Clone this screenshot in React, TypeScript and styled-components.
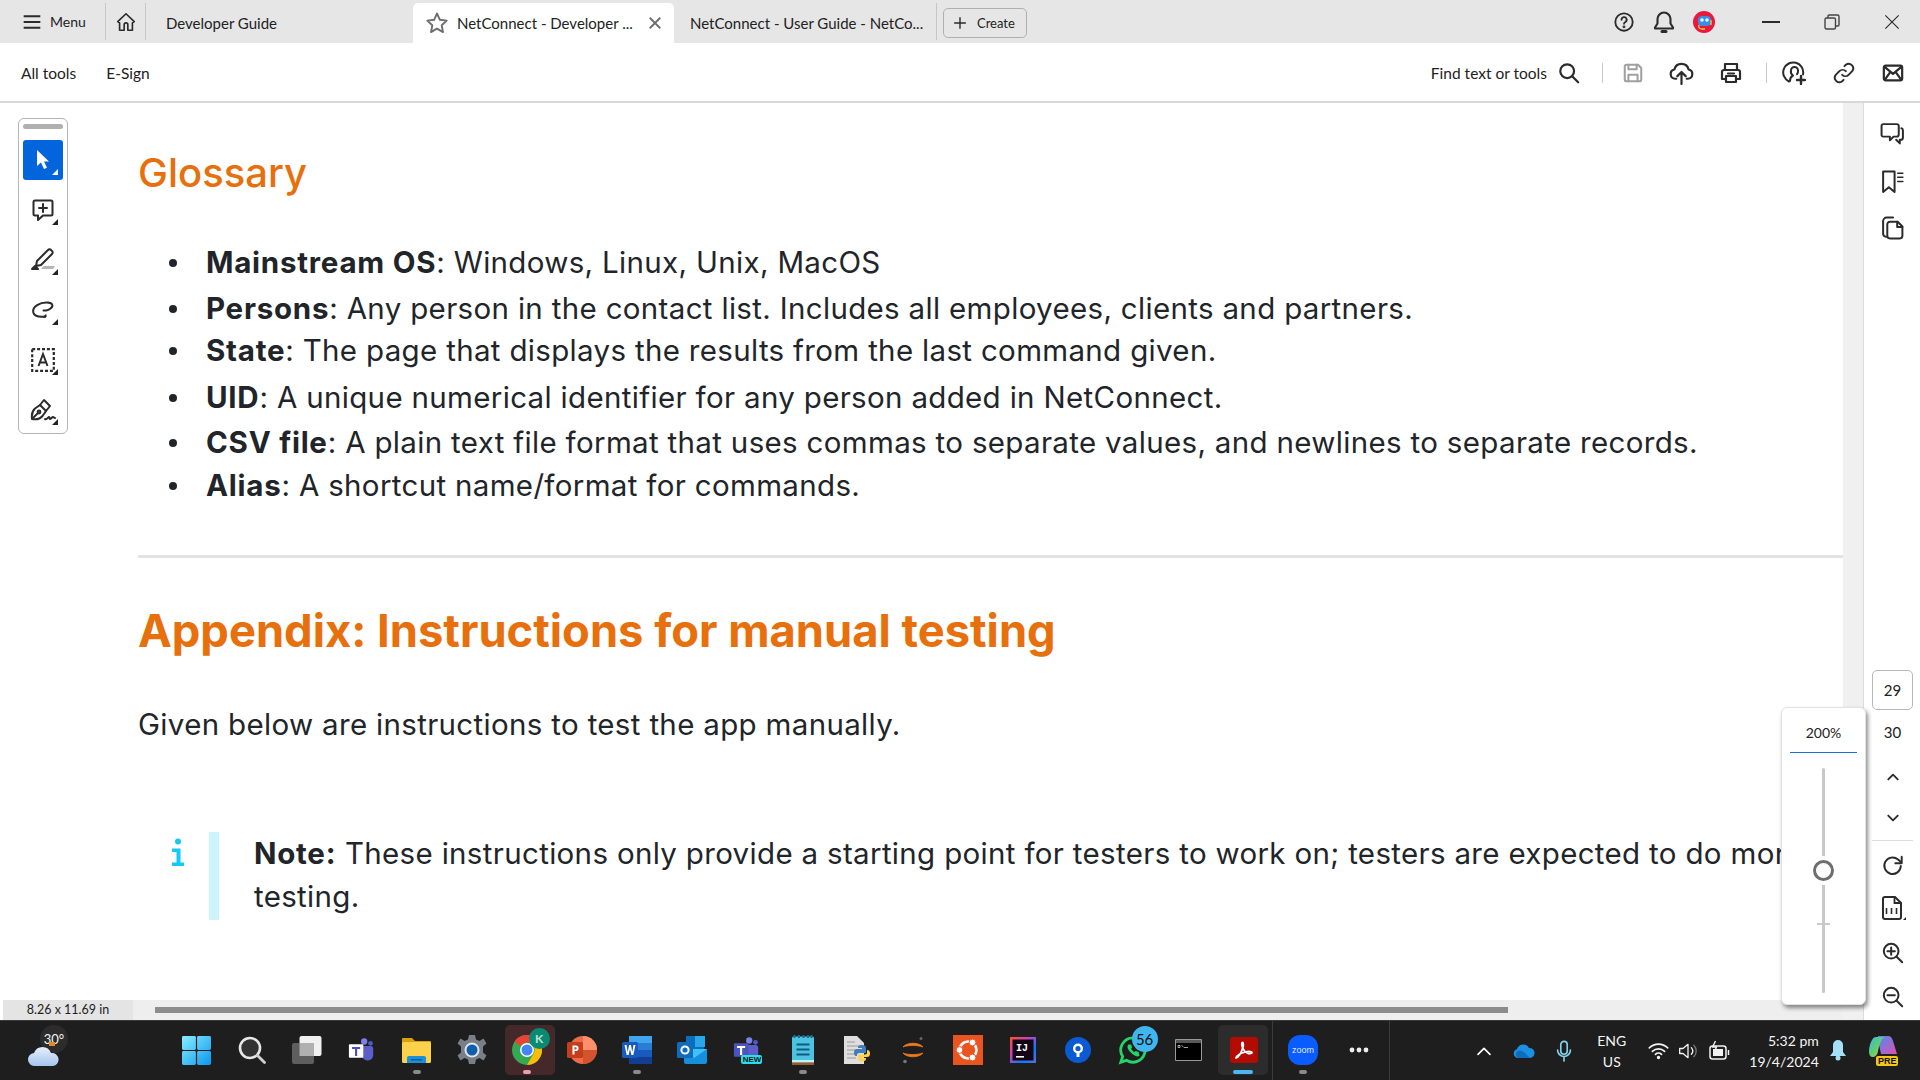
import * as React from 'react';
import styled, { createGlobalStyle } from 'styled-components';

const GlobalStyle = createGlobalStyle`
  html, body {
    margin: 0;
    padding: 0;
    background: #fff;
    overflow: hidden;
  }
`;

const Page = styled.div`
  width: 1920px;
  height: 1080px;
  display: flex;
  flex-direction: column;
  overflow: hidden;
  position: relative;
  font-family: 'Lato', 'Liberation Sans', sans-serif;
  color: #222;
`;

/* ---- title bar ---- */
const TitleBar = styled.div`
  height: 43px;
  flex: none;
  background: #e6e6e6;
  display: flex;
  align-items: flex-end;
  font-size: 15px;
`;

const MenuButton = styled.div`
  width: 106px;
  height: 37px;
  flex: none;
  box-sizing: border-box;
  padding-left: 22px;
  display: flex;
  align-items: center;
  gap: 8px;
  font-size: 14px;
  margin-bottom: 3px;
  border-right: 1px solid #c6c6c6;
`;

const HomeButton = styled.div`
  width: 40px;
  height: 37px;
  flex: none;
  box-sizing: border-box;
  display: flex;
  align-items: center;
  justify-content: center;
  margin-bottom: 3px;
  border-right: 1px solid #c6c6c6;
`;

const PlainTab = styled.div<{ $width: number; $pad: number }>`
  width: ${p => p.$width}px;
  height: 40px;
  flex: none;
  padding-left: ${p => p.$pad}px;
  box-sizing: border-box;
  display: flex;
  align-items: center;
  white-space: nowrap;
`;

const ActiveTab = styled.div`
  width: 261px;
  height: 40px;
  flex: none;
  box-sizing: border-box;
  background: #fff;
  border-radius: 5px 5px 0 0;
  padding: 0 12px;
  display: flex;
  align-items: center;
  gap: 8px;
  white-space: nowrap;

  svg:last-child {
    margin-left: auto;
  }
`;

const TabSplit = styled.div`
  width: 1px;
  height: 37px;
  background: #c6c6c6;
  margin-bottom: 3px;
`;

const CreateButton = styled.div`
  width: 84px;
  height: 30px;
  box-sizing: border-box;
  margin: 0 0 5px 6px;
  border: 1px solid #b0b0b0;
  border-radius: 5px;
  display: flex;
  align-items: center;
  gap: 10px;
  padding-left: 9px;
  font-size: 13px;
`;

const Spacer = styled.div`
  flex: 1;
`;

const TitleIcons = styled.div`
  height: 43px;
  display: flex;
  align-items: center;
  gap: 17px;
  margin-right: 47px;
  padding-top: 1px;
  box-sizing: border-box;
`;

const WindowControls = styled.div`
  height: 43px;
  display: flex;
  align-items: center;
  gap: 44px;
  margin-right: 20px;
`;

/* ---- tool bar ---- */
const ToolBar = styled.div`
  height: 60px;
  flex: none;
  box-sizing: border-box;
  border-bottom: 2px solid #d8d8d8;
  display: flex;
  align-items: center;
  padding: 1px 16px 0 21px;
  font-size: 15.5px;
`;

const ToolLink = styled.div`
  margin-right: 30px;
`;

const ToolGroup = styled.div<{ $gap: number }>`
  display: flex;
  align-items: center;
  gap: ${p => p.$gap}px;
`;

const ToolDivider = styled.div<{ $before: number; $after: number }>`
  width: 1px;
  height: 20px;
  margin: 0 ${p => p.$after}px 0 ${p => p.$before}px;
  background: #c8c8c8;
`;

/* ---- main area ---- */
const Main = styled.div`
  flex: 1;
  display: flex;
  min-height: 0;
`;

const DocColumn = styled.div`
  width: 1843px;
  display: flex;
  flex-direction: column;
  position: relative;
`;

const Doc = styled.div`
  flex: 1;
  min-height: 0;
  overflow: hidden;
  box-sizing: border-box;
  padding: 45px 0 0 138px;
  font-family: 'Inter', 'Liberation Sans', sans-serif;
  color: #212529;
`;

const Glossary = styled.h2`
  margin: 0;
  font-size: 40px;
  line-height: 50px;
  font-weight: 500;
  color: #e76f0c;
`;

const GlossaryList = styled.ul`
  list-style: none;
  margin: 44px 0 0;
  padding: 0;
`;

const BodyText = `
  font-size: 29.5px;
  letter-spacing: 0.33px;
  white-space: nowrap;

  strong {
    font-weight: 700;
    letter-spacing: 0.75px;
  }
`;

const GlossaryItem = styled.li<{ $gap: number }>`
  position: relative;
  margin-top: ${p => p.$gap}px;
  padding-left: 68px;
  line-height: 40px;
  ${BodyText}

  &::before {
    content: '';
    position: absolute;
    left: 31px;
    top: 17px;
    width: 8px;
    height: 8px;
    border-radius: 50%;
    background: #212529;
  }
`;

const Rule = styled.hr`
  border: none;
  height: 3px;
  background: #e3e3e3;
  margin: 50px 0 0;
`;

const AppendixHeading = styled.h1`
  margin: 43px 0 0;
  font-size: 45.3px;
  line-height: 60px;
  font-weight: 700;
  color: #e76f0c;
  white-space: nowrap;
`;

const Lead = styled.p`
  margin: 43px 0 0;
  line-height: 40px;
  ${BodyText}
`;

const NoteBox = styled.div`
  display: flex;
  margin: 88px 0 0 33px;
`;

const NoteIcon = styled.div`
  width: 38px;
  flex: none;
  padding-top: 6px;
`;

const NoteBody = styled.div`
  border-left: 10px solid #cdf3fc;
  padding: 0 0 0 35px;
  height: 88px;
  line-height: 43px;
  ${BodyText}
`;

const StatusRow = styled.div`
  height: 20px;
  flex: none;
  display: flex;
  background: #eeeeee;
  margin-left: 3px;
`;

const PageSize = styled.div`
  width: 130px;
  background: #e4e4e4;
  font-size: 12.5px;
  line-height: 20px;
  text-align: center;
  flex: none;
`;

const HThumbRow = styled.div`
  flex: 1;
  padding: 7px 0 0 22px;
`;

const HThumb = styled.div`
  width: 1353px;
  height: 6px;
  background: #8c8c8c;
`;

const VTrack = styled.div`
  width: 20px;
  flex: none;
  background: #f0f0f0;
`;

const Rail = styled.div`
  width: 57px;
  flex: none;
  box-sizing: border-box;
  border-left: 1px solid #dcdcdc;
  display: flex;
  flex-direction: column;
  align-items: center;
  padding: 18px 0 11px 1px;
  position: relative;
`;

const RailIcon = styled.div<{ $top: number }>`
  height: 24px;
  margin-top: ${p => p.$top}px;
  display: flex;
  align-items: center;
  justify-content: center;
`;

const RailSpacer = styled.div`
  flex: 1;
`;

const PageBox = styled.div`
  width: 41px;
  height: 40px;
  flex: none;
  box-sizing: border-box;
  border: 1px solid #b8b8b8;
  border-radius: 5px;
  font-size: 15px;
  display: flex;
  align-items: center;
  justify-content: center;
`;

const PageNum = styled.div`
  height: 39px;
  margin-top: 2px;
  font-size: 15px;
  display: flex;
  align-items: center;
  justify-content: center;
`;

const RailLine = styled.div`
  width: 41px;
  height: 1px;
  background: #ddd;
  margin-top: 10px;
`;

/* ---- floating parts ---- */
const Palette = styled.div`
  position: absolute;
  left: 18px;
  top: 15px;
  width: 50px;
  height: 316px;
  box-sizing: border-box;
  background: #fff;
  border: 1px solid #b5b5b5;
  border-radius: 6px;
  display: flex;
  flex-direction: column;
  align-items: center;
  gap: 10px;
  padding-top: 5px;
`;

const Grip = styled.div`
  width: 40px;
  height: 5px;
  flex: none;
  border-radius: 3px;
  background: #b0b0b0;
  margin-bottom: 1px;
`;

const PaletteButton = styled.div<{ $active?: boolean }>`
  width: 40px;
  height: 40px;
  flex: none;
  border-radius: 3px;
  background: ${p => (p.$active ? '#0265dc' : 'transparent')};
  display: flex;
  align-items: center;
  justify-content: center;
  position: relative;

  &::after {
    content: '';
    position: absolute;
    right: 5px;
    bottom: 5px;
    border-style: solid;
    border-width: 0 0 6px 6px;
    border-color: transparent transparent ${p => (p.$active ? '#fff' : '#222')} transparent;
  }
`;

const ZoomPopup = styled.div`
  position: absolute;
  left: 1781px;
  top: 604px;
  width: 85px;
  height: 298px;
  box-sizing: border-box;
  background: #fff;
  border: 1px solid #e2e2e2;
  border-radius: 6px;
  box-shadow: 2px 3px 4px rgba(0, 0, 0, 0.45);
  display: flex;
  flex-direction: column;
  align-items: center;
  z-index: 2;
`;

const ZoomValue = styled.div`
  width: 67px;
  height: 44px;
  border-bottom: 1px solid #1f6fc9;
  font-size: 14px;
  line-height: 50px;
  text-align: center;
`;

const SliderTrack = styled.div`
  width: 3px;
  height: 225px;
  margin-top: 15px;
  background: #c8c8c8;
  border-radius: 2px;
  position: relative;
`;

const SliderKnob = styled.div`
  position: absolute;
  left: -9px;
  top: 92px;
  width: 21px;
  height: 21px;
  box-sizing: border-box;
  border: 3px solid #6e6e6e;
  border-radius: 50%;
  background: #fff;
  box-shadow: 0 0 0 4px #fff;
`;

const SliderTick = styled.div`
  position: absolute;
  left: -5px;
  top: 155px;
  width: 13px;
  height: 2px;
  background: #c8c8c8;
`;

/* ---- taskbar ---- */
const Taskbar = styled.div`
  height: 60px;
  flex: none;
  box-sizing: border-box;
  border-top: 1px solid #3a3a3a;
  background: #1e1e1e;
  display: flex;
  align-items: stretch;
  color: #f4f4f4;
  position: relative;
`;

const Weather = styled.div`
  width: 169px;
  flex: none;
  position: relative;
`;

const WeatherCloud = styled.div`
  position: absolute;
  left: 27px;
  top: 21px;
`;

const WeatherTemp = styled.div`
  position: absolute;
  left: 40px;
  top: 4px;
  width: 28px;
  height: 28px;
  border-radius: 50%;
  background: #2c2c2c;
  font-size: 13px;
  line-height: 28px;
  text-align: center;
`;

const AppSlot = styled.div<{ $active?: boolean; $tint?: string; $divider?: boolean; $width?: number }>`
  width: ${p => p.$width || 55.1}px;
  flex: none;
  position: relative;
  display: flex;
  align-items: center;
  justify-content: center;
  padding-bottom: 1px;
  box-sizing: border-box;
  border-right: ${p => (p.$divider ? '1px solid #3c3c3c' : 'none')};

  &::before {
    content: ${p => (p.$active ? "''" : 'none')};
    position: absolute;
    left: ${p => (p.$divider ? 2 : 5)}px;
    width: 50px;
    top: 4px;
    bottom: 5px;
    border-radius: 5px;
    background: ${p => p.$tint || '#2c2c2c'};
  }

  & > * {
    position: relative;
  }
`;

const RunDot = styled.div<{ $color?: string; $wide?: boolean; $shift?: number }>`
  && {
    position: absolute;
  }
  left: ${p => (p.$shift ? `calc(50% + ${p.$shift}px)` : '50%')};
  bottom: 6px;
  width: ${p => (p.$wide ? 20 : 8)}px;
  height: 4px;
  margin-left: ${p => (p.$wide ? -10 : -4)}px;
  border-radius: 2px;
  background: ${p => p.$color || '#8a8a8a'};
`;

const Badge = styled.div`
  && {
    position: absolute;
  }
  left: 26px;
  top: 5px;
  width: 26px;
  height: 26px;
  border-radius: 50%;
  background: #3fb6ee;
  color: #111;
  font-size: 15px;
  line-height: 26px;
  text-align: center;
`;

const AvatarBadge = styled.div`
  && {
    position: absolute;
  }
  left: 29px;
  top: 7px;
  width: 21px;
  height: 21px;
  border-radius: 50%;
  background: #0a8a72;
  color: #b8e6dc;
  font-size: 12px;
  font-weight: 700;
  line-height: 21px;
  text-align: center;
`;

const Tray = styled.div`
  flex: 1;
  display: flex;
  align-items: center;
  padding-left: 74px;
`;

const TrayCell = styled.div<{ $width: number }>`
  width: ${p => p.$width}px;
  flex: none;
  display: flex;
  align-items: center;
  justify-content: center;
`;

const LangBlock = styled.div`
  width: 56px;
  flex: none;
  text-align: center;
  font-size: 14px;
  line-height: 21px;
`;

const Clock = styled.div`
  width: 78px;
  flex: none;
  text-align: right;
  font-size: 14px;
  line-height: 21px;
  white-space: nowrap;
`;

const TagWrap = styled.div<{ $w: number; $h: number }>`
  position: relative;
  width: ${p => p.$w}px;
  height: ${p => p.$h}px;
`;

const NewTag = styled.span`
  position: absolute;
  left: 8px;
  top: 19px;
  width: 21px;
  height: 9px;
  background: #27e0ea;
  color: #111;
  font: 700 8px/9px 'Liberation Sans', sans-serif;
  text-align: center;
  border-radius: 2px;
`;

const PreTag = styled.span`
  position: absolute;
  right: 0;
  bottom: 0;
  width: 22px;
  height: 10px;
  border-radius: 2px;
  background: #f5c518;
  color: #111;
  font: 700 9px/10px 'Liberation Sans', sans-serif;
  text-align: center;
`;

/* ---- icons ---- */
const Stroke: React.FC<React.PropsWithChildren<{ size?: number; color?: string; sw?: number }>> = ({
  size = 24,
  color = '#2b2b2b',
  sw = 2,
  children,
}) => (
  <svg
    width={size}
    height={size}
    viewBox="0 0 24 24"
    fill="none"
    stroke={color}
    strokeWidth={sw}
    strokeLinecap="round"
    strokeLinejoin="round"
  >
    {children}
  </svg>
);

const HamburgerIcon = () => (
  <Stroke size={20} sw={2.4}>
    <path d="M2 5h20M2 12h20M2 19h20" strokeLinecap="butt" />
  </Stroke>
);
const HomeIcon = () => (
  <Stroke size={22} sw={1.8}>
    <path d="M3 11.5 12 3l9 8.5-2 1.5v8h-5v-6a2 2 0 0 0-4 0v6H5v-8z" />
  </Stroke>
);
const StarIcon = () => (
  <Stroke size={24} color="#6e6e6e" sw={1.9}>
    <path d="M12 2.5l2.9 6.3 6.8.8-5 4.7 1.3 6.8-6-3.4-6 3.4 1.3-6.8-5-4.7 6.8-.8z" />
  </Stroke>
);
const TabCloseIcon = () => (
  <Stroke size={14} color="#6e6e6e" sw={3.2}>
    <path d="M3 3l18 18M21 3 3 21" strokeLinecap="butt" />
  </Stroke>
);
const PlusIcon = () => (
  <Stroke size={14} sw={2.4}>
    <path d="M12 2v20M2 12h20" strokeLinecap="butt" />
  </Stroke>
);
const HelpIcon = () => (
  <Stroke size={22} sw={2}>
    <circle cx="12" cy="12" r="9.5" />
    <path d="M9.3 9.5a2.8 2.8 0 1 1 4.2 2.4c-.9.6-1.5 1-1.5 2.1" />
    <circle cx="12" cy="17.3" r=".6" fill="#2b2b2b" />
  </Stroke>
);
const BellIcon = () => (
  <Stroke size={24} sw={2.1}>
    <path d="M12 2.5A6.5 6.5 0 0 0 5.5 9v4.5L3 17.5v1h18v-1l-2.5-4V9A6.5 6.5 0 0 0 12 2.5z" />
    <path d="M10 21.5h4" strokeWidth="3" />
  </Stroke>
);
const AvatarIcon = () => (
  <svg width="22" height="22" viewBox="0 0 22 22">
    <circle cx="11" cy="11" r="11" fill="#e8183e" />
    <rect x="5" y="5" width="13" height="10" rx="4" fill="#3a8ce8" />
    <circle cx="9" cy="9" r="1.8" fill="#dff" />
    <circle cx="14" cy="9" r="1.8" fill="#dff" />
    <path d="M6 14c-1 3 1 4 3 4h3" fill="none" stroke="#f5c431" strokeWidth="1.4" />
    <path d="M18 9v5" stroke="#f5c431" strokeWidth="1.4" />
  </svg>
);
const MinimizeIcon = () => (
  <svg width="18" height="2" viewBox="0 0 18 2">
    <rect width="18" height="2" fill="#2b2b2b" />
  </svg>
);
const RestoreIcon = () => (
  <svg width="16" height="16" viewBox="0 0 16 16" fill="none" stroke="#444" strokeWidth="1.4">
    <rect x="1" y="4" width="10.5" height="11" rx="1.5" />
    <path d="M4 4V2.2C4 1.5 4.5 1 5.2 1h8.3c.8 0 1.5.7 1.5 1.5v8.3c0 .7-.5 1.2-1.2 1.2h-2" />
  </svg>
);
const WinCloseIcon = () => (
  <Stroke size={16} sw={1.7}>
    <path d="M2 2l20 20M22 2 2 22" strokeLinecap="butt" />
  </Stroke>
);
const SearchIcon = () => (
  <Stroke size={22} sw={2.4}>
    <circle cx="10" cy="10" r="7.5" />
    <path d="M16 16l6 6" />
  </Stroke>
);
const SaveIcon = () => (
  <Stroke size={22} color="#a0a0a0" sw={2.2}>
    <path d="M3 5a2 2 0 0 1 2-2h12.5L21 6.5V19a2 2 0 0 1-2 2H5a2 2 0 0 1-2-2z" />
    <path d="M7 3v5h9V3M7 21v-7h10v7" />
  </Stroke>
);
const UploadIcon = () => (
  <Stroke size={25} sw={2.1}>
    <path d="M7 18H6a4.5 4.5 0 0 1-.8-8.9 7 7 0 0 1 13.6 0A4.5 4.5 0 0 1 18 18h-1" />
    <path d="M12 23V12M8 15.5l4-4 4 4" />
  </Stroke>
);
const PrintIcon = () => (
  <Stroke size={24} sw={2.2}>
    <path d="M6 9V3h12v6" />
    <path d="M6 18H3v-7a2 2 0 0 1 2-2h14a2 2 0 0 1 2 2v7h-3" />
    <path d="M7 15h10v6H7z" />
    <path d="M9 12.5h6" />
  </Stroke>
);
const ShareIcon = () => (
  <Stroke size={24} sw={2}>
    <path d="M7 20.5a10 10 0 1 1 14-7" />
    <path d="M8 20c0-3 1-4.5 3-5.5-1.5-1-2.5-3-2-5a3.500 3.500 0 0 1 7 0c.2 1.500-.2 2.700-1 3.700" />
    <path d="M19 15v8M15 19h8" strokeWidth="2.4" />
  </Stroke>
);
const LinkIcon = () => (
  <Stroke size={22} sw={2.1}>
    <path d="M10 14a5 5 0 0 0 7 0l4-4a5 5 0 0 0-7-7l-1.5 1.5" />
    <path d="M14 10a5 5 0 0 0-7 0l-4 4a5 5 0 0 0 7 7l1.5-1.5" />
  </Stroke>
);
const MailIcon = () => (
  <Stroke size={22} sw={2.4}>
    <rect x="2" y="4" width="20" height="16" rx="2" />
    <path d="M2.5 5 12 13l9.5-8M3 19.5l6-8.5M21 19.5 15 11" />
  </Stroke>
);
const CommentsIcon = () => (
  <Stroke size={25} sw={1.9}>
    <path d="M3 3h13a2 2 0 0 1 2 2v8a2 2 0 0 1-2 2h-3l-3.5 3.5V15H3a1.5 1.5 0 0 1-1.5-1.5v-9A1.5 1.5 0 0 1 3 3z" />
    <path d="M20.5 7c1 .2 1.5.9 1.5 2v7a2 2 0 0 1-2 2h-1v3.5L15.5 18" />
  </Stroke>
);
const BookmarkIcon = () => (
  <Stroke size={25} sw={1.9}>
    <path d="M3 2.5h11V22l-5.5-4.5L3 22z" />
    <path d="M17 4h5M17 8h5M17 12h5" strokeWidth="1.4" />
  </Stroke>
);
const PagesIcon = () => (
  <Stroke size={25} sw={1.9}>
    <path d="M6 21c-2-.3-3-1.5-3-3V6c0-2 1.5-3.5 3.5-3.5h6" />
    <path d="M7 9a2.5 2.5 0 0 1 2.5-2.5H17l4.5 4.5v9A2.5 2.5 0 0 1 19 22.5H9.5A2.5 2.5 0 0 1 7 20z" />
    <path d="M16.5 6.5V11.5h5" />
  </Stroke>
);
const ChevronUp = () => (
  <Stroke size={14} sw={3.2}>
    <path d="M3 17l9-9 9 9" strokeLinecap="butt" />
  </Stroke>
);
const ChevronDown = () => (
  <Stroke size={14} sw={3.2}>
    <path d="M3 7l9 9 9-9" strokeLinecap="butt" />
  </Stroke>
);
const RotateIcon = () => (
  <Stroke size={22} sw={2.1}>
    <path d="M20.5 12a9 9 0 1 1-3-7l3.500 3" />
    <path d="M21.5 2v7h-7" />
  </Stroke>
);
const ActualSizeIcon = () => (
  <svg width="26" height="26" viewBox="0 0 26 26">
    <path d="M5 2h10l6 6v14a2 2 0 0 1-2 2H5a2 2 0 0 1-2-2V4a2 2 0 0 1 2-2z" fill="none" stroke="#2b2b2b" strokeWidth="2" />
    <path d="M14.5 2v6h6" fill="none" stroke="#2b2b2b" strokeWidth="1.8" />
    <path d="M6.5 13v6M11.5 13v6M16.5 13v6" stroke="#2b2b2b" strokeWidth="1.6" />
    <path d="M9 14.5v.1M9 17.5v.1" stroke="#2b2b2b" strokeWidth="1.6" />
    <path d="M23 25h3v-3z" fill="#222" />
  </svg>
);
const ZoomInIcon = () => (
  <Stroke size={22} sw={2.2}>
    <circle cx="10" cy="10" r="8" />
    <path d="M16 16l6 6M10 6v8M6 10h8" />
  </Stroke>
);
const ZoomOutIcon = () => (
  <Stroke size={22} sw={2.2}>
    <circle cx="10" cy="10" r="8" />
    <path d="M16 16l6 6M6 10h8" />
  </Stroke>
);
const ArrowIcon = () => (
  <svg width="20" height="22" viewBox="0 0 20 22">
    <path d="M5 1v16l4-3.5 3 6.5 3-1.300-3-6.300h5z" fill="#fff" transform="translate(-1 0)" />
  </svg>
);
const AddCommentIcon = () => (
  <Stroke size={24} sw={2}>
    <path d="M4 2.5h16a1.5 1.5 0 0 1 1.5 1.5v12a1.5 1.5 0 0 1-1.5 1.5h-8L7 22v-4.5H4A1.5 1.5 0 0 1 2.5 16V4A1.5 1.5 0 0 1 4 2.5z" />
    <path d="M12 6v8M8 10h8" />
  </Stroke>
);
const HighlightIcon = () => (
  <svg width="26" height="26" viewBox="0 0 26 26" fill="none" stroke="#2b2b2b" strokeWidth="2" strokeLinejoin="round">
    <path d="M7 14 18 3a2 2 0 0 1 3 0l1 1a2 2 0 0 1 0 3L11 18l-5 1z" />
    <path d="M2 22l3-3 3 3z" fill="#2b2b2b" />
    <path d="M11 22h12l2-3H14z" fill="#b5b5b5" stroke="none" />
  </svg>
);
const LassoIcon = () => (
  <Stroke size={26} sw={1.9}>
    <path d="M20 9.5c1.5-2 .5-4-3-4.300C9 4.500 2 9 3 14c.8 3.500 6 4.500 11 4" />
    <path d="M13 18.3c1 .2 1.6-.5 1.4-1.3" />
    <path d="M20 9.5c-1.500 1.800-4.500 3-7.500 3" />
  </Stroke>
);
const TextBoxIcon = () => (
  <svg width="24" height="24" viewBox="0 0 24 24">
    <rect x="1.2" y="1.2" width="21.6" height="21.6" fill="none" stroke="#2b2b2b" strokeWidth="2.2" strokeDasharray="3 1.9" />
    <path d="M7.5 18 12 6l4.5 12M9 14.5h6" fill="none" stroke="#2b2b2b" strokeWidth="2" />
  </svg>
);
const SignIcon = () => (
  <svg width="26" height="24" viewBox="0 0 26 24" fill="none" stroke="#2b2b2b" strokeWidth="2" strokeLinejoin="round" strokeLinecap="round">
    <path d="M2 21c-.6-4 .4-8 3-10.500l5-3.500 6 6-3.500 5C10 21 6 21.800 2 21z" />
    <path d="M10 7l4-5 6 6-4 5" />
    <path d="M2.5 20.500 8 15" />
    <circle cx="9" cy="14" r="1.4" />
    <path d="M15 21c2 1 3-2 4-2s0 2 1 2 2-2 3-2 1 1 2 1" />
  </svg>
);
const InfoIcon = () => (
  <svg width="14" height="30" viewBox="0 0 14 30" fill="#13c9f5">
    <circle cx="7" cy="3.5" r="3" />
    <path d="M1 10.500h8.500v14H13V28H1v-3.500h4.500v-10.500H1z" />
  </svg>
);

const WindowsLogo = () => (
  <svg width="29" height="29" viewBox="0 0 30 30">
    <defs>
      <linearGradient id="wing" x1="0" y1="0" x2="30" y2="30" gradientUnits="userSpaceOnUse">
        <stop offset="0" stopColor="#8aeeff" />
        <stop offset="1" stopColor="#0a96ee" />
      </linearGradient>
    </defs>
    <rect x="0" y="0" width="14.4" height="14.4" rx="1.5" fill="url(#wing)" />
    <rect x="15.6" y="0" width="14.4" height="14.4" rx="1.5" fill="url(#wing)" />
    <rect x="0" y="15.6" width="14.4" height="14.4" rx="1.5" fill="url(#wing)" />
    <rect x="15.6" y="15.6" width="14.4" height="14.4" rx="1.5" fill="url(#wing)" />
  </svg>
);
const TaskSearch = () => (
  <svg width="28" height="28" viewBox="0 0 28 28" fill="none">
    <circle cx="12" cy="12" r="10" fill="#333" stroke="#e8e8e8" strokeWidth="2.6" />
    <path d="M19.5 19.5l7 7" stroke="#d0d0d0" strokeWidth="2.8" strokeLinecap="round" />
  </svg>
);
const TaskView = () => (
  <svg width="30" height="30" viewBox="0 0 30 30">
    <rect x="7.5" y="1" width="22" height="20" rx="2" fill="#f0f0f0" />
    <rect x="0" y="8" width="22" height="21" rx="2" fill="#5e5e5e" />
    <rect x="7.5" y="8" width="14.5" height="13" fill="#b0b0b0" />
  </svg>
);
const TeamsIcon: React.FC<{ isNew?: boolean }> = ({ isNew }) => (
  <svg width="27" height="27" viewBox="0 0 30 30">
    <circle cx="18" cy="5" r="3.5" fill="#7b83eb" />
    <circle cx="25" cy="7" r="2.6" fill="#5059c9" />
    <path d="M13 10h12a3 3 0 0 1 3 3v7c0 4-3 6-6 6s-6-2-7-5z" fill="#5b5fc7" />
    <rect x="1" y="8" width="16" height="15" rx="1" fill={isNew ? '#4b53bc' : '#fff'} />
    <path d="M4.5 11h9v2.3h-3.300V21H7.800v-7.700H4.500z" fill={isNew ? '#fff' : '#4b53bc'} />
  </svg>
);
const FolderIcon = () => (
  <svg width="29" height="26" viewBox="0 0 29 26">
    <path d="M0 2a1 1 0 0 1 1-1h9l3 3h15a1 1 0 0 1 1 1v4H0z" fill="#dba00f" />
    <rect y="5" width="29" height="21" rx="1.5" fill="#fbd24a" />
    <path d="M5 21a2 2 0 0 1 2-2h15a2 2 0 0 1 2 2v5H5z" fill="#1b8fd8" />
    <rect x="9" y="22" width="11" height="1.5" fill="#0a5f9e" />
  </svg>
);
const GearIcon = () => (
  <svg width="30" height="30" viewBox="0 0 30 30">
    <path
      d="M12 0h6l1 4.500 3.500 1.500 4-2.500 3 5-3.500 3v6l3.500 3-3 5-4-2.500-3.500 1.500-1 4.500h-6l-1-4.500-3.500-1.500-4 2.500-3-5 3.500-3v-6l-3.500-3 3-5 4 2.500L11 4.500z"
      fill="#7a7f86"
    />
    <circle cx="15" cy="15" r="7.5" fill="#dfe6ee" />
    <circle cx="15" cy="15" r="5.5" fill="#0f5fa8" />
  </svg>
);
const ChromeIcon = () => (
  <svg width="30" height="30" viewBox="0 0 30 30">
    <circle cx="15" cy="15" r="15" fill="#34a853" />
    <path d="M15 0a15 15 0 0 1 13 7.500H15a7.500 7.500 0 0 0-6.500 3.800L2.500 6.500A15 15 0 0 1 15 0z" fill="#ea4335" />
    <path d="M28 7.500A15 15 0 0 1 15 30l6.500-11.300A7.500 7.500 0 0 0 21.500 11z" fill="#fbbc04" />
    <circle cx="15" cy="15" r="7" fill="#fff" />
    <circle cx="15" cy="15" r="5.5" fill="#4285f4" />
  </svg>
);
const PowerPointIcon = () => (
  <svg width="30" height="30" viewBox="0 0 30 30">
    <circle cx="16" cy="15" r="14" fill="#ed6c47" />
    <path d="M16 1a14 14 0 0 1 14 14H16z" fill="#ff8f6b" />
    <path d="M16 15h14a14 14 0 0 1-14 14z" fill="#d35230" />
    <rect x="0" y="7" width="16" height="16" rx="1.5" fill="#c43e1c" />
    <path d="M5.500 10.500h3.300a2.800 2.800 0 0 1 0 5.600H7.500v3.400h-2zm2 1.700v2.300h1a1.150 1.150 0 0 0 0-2.300z" fill="#fff" />
  </svg>
);
const WordIcon = () => (
  <svg width="30" height="30" viewBox="0 0 30 30">
    <rect x="7" y="1" width="23" height="28" rx="2" fill="#2b7cd3" />
    <rect x="7" y="1" width="23" height="7" fill="#41a5ee" />
    <rect x="7" y="15" width="23" height="7" fill="#185abd" />
    <rect x="7" y="22" width="23" height="7" fill="#103f91" />
    <rect x="0" y="7" width="16" height="16" rx="1.5" fill="#185abd" />
    <path d="M2.500 10h2l1.200 7 1.400-7h1.800l1.400 7 1.200-7h2l-2.200 10h-1.900L8 14l-1.400 6H4.700z" fill="#fff" />
  </svg>
);
const OutlookIcon = () => (
  <svg width="30" height="30" viewBox="0 0 30 30">
    <rect x="9" y="1" width="18" height="22" fill="#0a6ebd" />
    <rect x="18" y="1" width="10" height="11" fill="#28a8ea" />
    <path d="M7 14h23v13a2 2 0 0 1-2 2H9a2 2 0 0 1-2-2z" fill="#1490df" />
    <path d="M30 14 17 23l-10-9z" fill="#50d9ff" opacity="0.7" />
    <rect x="0" y="7" width="16" height="16" rx="1.5" fill="#0f6cbd" />
    <circle cx="8" cy="15" r="3.6" fill="none" stroke="#fff" strokeWidth="2" />
  </svg>
);
const TeamsNewIcon = () => (
  <TagWrap $w={28} $h={28}>
    <TeamsIcon isNew />
    <NewTag>NEW</NewTag>
  </TagWrap>
);
const NotepadIcon = () => (
  <svg width="22" height="30" viewBox="0 0 22 30">
    <rect y="1.5" width="22" height="28.5" rx="1.5" fill="#4cc3e0" />
    <rect y="25" width="22" height="2.5" fill="#c4f0fa" />
    <rect y="27.5" width="22" height="2.5" fill="#9c5a2a" />
    <path d="M2.500 0v3M7 0v3M11.500 0v3M16 0v3M19.500 0v3" stroke="#14708c" strokeWidth="2" />
    <path d="M4.500 9.500h13M4.500 14.500h13M4.500 19.500h13" stroke="#135a80" strokeWidth="2.2" />
  </svg>
);
const PythonFileIcon = () => (
  <svg width="28" height="28" viewBox="0 0 28 28">
    <path d="M0 0h13l7 7v21H0z" fill="#dedede" />
    <path d="M3 6h8M3 10h12M3 14h9M3 18h9M3 22h9" stroke="#9a9a9a" strokeWidth="1.2" />
    <path d="M18 9c3 0 4 1 4 3v5h-7c-1.500 0-2 1-2 2v1h-1c-1.500 0-2-1.500-2-3.500 0-2.500 1-3.500 3-3.500h5v-1h-4v-1c0-1.500 1.500-2 4-2z" fill="#3f7cc0" />
    <path d="M23 14c2 0 3 1 3 3.500S25 21 23 21h-5v1h4v1c0 1.500-1.500 2.500-4 2.500s-4-1-4-3v-4h7c1.500 0 2-1 2-2v-2.500z" fill="#fbd24a" />
  </svg>
);
const EclipseIcon = () => (
  <svg width="22" height="28" viewBox="0 0 22 28" fill="none">
    <path d="M1 11C5 6 17 6 21 11c-5-2-16-2-20 0z" fill="#f07a1f" stroke="#f07a1f" strokeWidth="0.8" />
    <path d="M1 17c4 5 16 5 20 0-5 2-16 2-20 0z" fill="#f07a1f" stroke="#f07a1f" strokeWidth="0.8" />
    <circle cx="19" cy="2.5" r="1.5" fill="#666" />
    <circle cx="3" cy="25.5" r="1.8" fill="#777" />
  </svg>
);
const UbuntuIcon = () => (
  <svg width="30" height="30" viewBox="0 0 30 30">
    <rect width="30" height="30" fill="#e95420" />
    <circle cx="15" cy="15" r="8.5" fill="none" stroke="#fff" strokeWidth="2.6" />
    <circle cx="6.5" cy="15" r="3.4" fill="#fff" stroke="#e95420" />
    <circle cx="19.5" cy="7.5" r="3.4" fill="#fff" stroke="#e95420" />
    <circle cx="19.5" cy="22.5" r="3.4" fill="#fff" stroke="#e95420" />
  </svg>
);
const IntelliJIcon = () => (
  <svg width="26" height="26" viewBox="0 0 26 26">
    <defs>
      <linearGradient id="ij" x1="0" y1="0" x2="1" y2="1">
        <stop offset="0" stopColor="#f9552a" />
        <stop offset="0.35" stopColor="#d43fb0" />
        <stop offset="0.7" stopColor="#087cfa" />
        <stop offset="1" stopColor="#5a6fd8" />
      </linearGradient>
    </defs>
    <rect width="26" height="26" fill="url(#ij)" />
    <rect x="2.5" y="2.5" width="21" height="21" fill="#120516" />
    <text x="6" y="13.5" fill="#fff" fontSize="10" fontWeight="700" fontFamily="Liberation Mono">IJ</text>
    <rect x="6" y="19" width="8" height="1.6" fill="#fff" />
  </svg>
);
const SourcetreeIcon = () => (
  <svg width="26" height="26" viewBox="0 0 26 26">
    <circle cx="13" cy="13" r="13" fill="#0a5ad4" />
    <circle cx="13" cy="11.5" r="3.8" fill="none" stroke="#fff" strokeWidth="2.4" />
    <path d="M13 15v5" stroke="#fff" strokeWidth="3" />
  </svg>
);
const WhatsAppIcon = () => (
  <svg width="30" height="30" viewBox="0 0 32 32" fill="none">
    <path d="M16 3a13 13 0 0 0-11 20l-2 6 6-2A13 13 0 1 0 16 3z" stroke="#25d366" strokeWidth="3" />
    <path d="M11 10c-2 3 0 6 3 9s6 5 9 3l-1-4-3-1-2 1-3-3 1-2-1-3z" fill="#25d366" />
  </svg>
);
const TerminalIcon = () => (
  <svg width="27" height="22" viewBox="0 0 27 22">
    <rect width="27" height="22" rx="1" fill="#9a9a9a" />
    <rect x="1" y="1" width="25" height="3" fill="#5a5a5a" />
    <rect x="1" y="4" width="25" height="17" fill="#000" />
    <path d="M3 6.500h2v2H3zM6.500 6.500l2 1.500M9 8.500h4" stroke="#ccc" strokeWidth="0.8" fill="none" />
  </svg>
);
const AcrobatIcon = () => (
  <svg width="28" height="26" viewBox="0 0 28 26">
    <rect width="28" height="26" rx="3" fill="#b30b00" />
    <path
      d="M6 21c3-1 5.500-6 7-11 .6-2 .4-4.500-.5-4.500s-1 2.500 0 5c1.300 3 3.500 5.500 6 6 1.800.3 3.500 0 3.500-1s-3-1.300-6-.7c-3 .5-5.500 1.500-7.500 3.200-1.300 1-2.900 2.300-2.500 3z"
      fill="none"
      stroke="#fff"
      strokeWidth="1.8"
    />
  </svg>
);
const ZoomAppIcon = () => (
  <svg width="30" height="30" viewBox="0 0 30 30">
    <rect width="30" height="30" rx="12" fill="#0b5cff" />
    <text x="15" y="18" fill="#dfe9ff" fontSize="9" textAnchor="middle" fontFamily="Liberation Sans">zoom</text>
  </svg>
);
const DotsIcon = () => (
  <svg width="24" height="6" viewBox="0 0 24 6" fill="#eee">
    <circle cx="3" cy="3" r="2.4" />
    <circle cx="10" cy="3" r="2.4" />
    <circle cx="17" cy="3" r="2.4" />
  </svg>
);
const CloudSun = () => (
  <svg width="34" height="24" viewBox="0 0 34 24">
    <defs>
      <linearGradient id="cloud" x1="0" y1="0" x2="0" y2="1">
        <stop offset="0" stopColor="#e6f0fc" />
        <stop offset="1" stopColor="#a5c4ee" />
      </linearGradient>
    </defs>
    <rect x="22" y="0" width="6" height="4" fill="#e88a20" />
    <path d="M8 24a6.500 6.500 0 0 1-1-13 9 9 0 0 1 17 0 6.500 6.500 0 0 1 2 13z" fill="url(#cloud)" />
  </svg>
);
const TrayChevron = () => (
  <Stroke size={16} color="#fff" sw={2.4}>
    <path d="M3 17l9-9 9 9" />
  </Stroke>
);
const OneDriveIcon = () => (
  <svg width="22" height="14" viewBox="0 0 22 14">
    <path d="M5 14a4.500 4.500 0 0 1-1-8.800A6.500 6.500 0 0 1 16 4a5 5 0 0 1 1 10z" fill="#1b8fe2" />
    <path d="M5 14a4 4 0 0 1 0-7c2-1 5 0 7 2l5 5z" fill="#0f6cbd" />
  </svg>
);
const MicIcon = () => (
  <Stroke size={22} color="#84d2ea" sw={1.8}>
    <rect x="8.5" y="1.5" width="7" height="14" rx="3.5" />
    <path d="M5 11a7 7 0 0 0 14 0M12 18v5" />
  </Stroke>
);
const WifiIcon = () => (
  <Stroke size={21} color="#f2f2f2" sw={1.9}>
    <path d="M1.500 9a15 15 0 0 1 21 0M5 13a10 10 0 0 1 14 0M8.500 16.500a5 5 0 0 1 7 0" />
    <circle cx="12" cy="20" r="1" fill="#f2f2f2" />
  </Stroke>
);
const VolumeIcon = () => (
  <Stroke size={20} color="#f2f2f2" sw={1.6}>
    <path d="M2 9v6h4l6 5V4L6 9z" />
    <path d="M16 8a6 6 0 0 1 0 8" />
    <path d="M19 5a10 10 0 0 1 0 14" stroke="#777" />
  </Stroke>
);
const BatteryIcon = () => (
  <svg width="22" height="22" viewBox="0 0 22 22" fill="none" stroke="#f2f2f2" strokeWidth="1.5" strokeLinejoin="round">
    <rect x="2" y="6" width="16" height="13" rx="2.5" />
    <path d="M20.500 10v5" />
    <rect x="5" y="9" width="10" height="7" fill="#f2f2f2" stroke="none" />
    <path d="M7.500 1 4.500 7h4l-2 5" strokeWidth="1.4" />
  </svg>
);
const TrayBell = () => (
  <svg width="16" height="21" viewBox="0 0 16 21">
    <path d="M8 0a5 5 0 0 0-5 5v7l-3 4h16l-3-4V5a5 5 0 0 0-5-5z" fill="#a6e0f8" />
    <circle cx="8" cy="18" r="2.5" fill="#a6e0f8" />
  </svg>
);
const CopilotIcon = () => (
  <TagWrap $w={30} $h={30}>
    <svg width="30" height="24" viewBox="0 0 30 24">
      <defs>
        <linearGradient id="cop" x1="0" y1="0" x2="1" y2="1">
          <stop offset="0" stopColor="#3fb4f0" />
          <stop offset="0.5" stopColor="#5bd070" />
          <stop offset="1" stopColor="#f0c040" />
        </linearGradient>
        <linearGradient id="cop2" x1="0" y1="0" x2="1" y2="1">
          <stop offset="0" stopColor="#4c8cf0" />
          <stop offset="1" stopColor="#e050b0" />
        </linearGradient>
      </defs>
      <path d="M10 0h10c3 0 4 2 5 5l4 13H13L10 4z" fill="url(#cop2)" />
      <path d="M8 1h8c-3 3-5 8-6 14-.5 4-3 6-5.500 6C2.500 21 1 19 1 16 1 9 4 1 8 1z" fill="url(#cop)" />
    </svg>
    <PreTag>PRE</PreTag>
  </TagWrap>
);

const App: React.FC = () => (
  <Page>
    <GlobalStyle />
    <TitleBar>
      <MenuButton>
        <HamburgerIcon />
        Menu
      </MenuButton>
      <HomeButton>
        <HomeIcon />
      </HomeButton>
      <PlainTab $width={267} $pad={20}>Developer Guide</PlainTab>
      <ActiveTab>
        <StarIcon />
        NetConnect - Developer ...
        <TabCloseIcon />
      </ActiveTab>
      <PlainTab $width={262} $pad={16}>NetConnect - User Guide - NetCo...</PlainTab>
      <TabSplit />
      <CreateButton>
        <PlusIcon />
        Create
      </CreateButton>
      <Spacer />
      <TitleIcons>
        <HelpIcon />
        <BellIcon />
        <AvatarIcon />
      </TitleIcons>
      <WindowControls>
        <MinimizeIcon />
        <RestoreIcon />
        <WinCloseIcon />
      </WindowControls>
    </TitleBar>

    <ToolBar>
      <ToolLink>All tools</ToolLink>
      <ToolLink>E-Sign</ToolLink>
      <Spacer />
      <ToolGroup $gap={11}>
        <span>Find text or tools</span>
        <SearchIcon />
      </ToolGroup>
      <ToolDivider $before={22} $after={19} />
      <ToolGroup $gap={25}>
        <SaveIcon />
        <UploadIcon />
        <PrintIcon />
      </ToolGroup>
      <ToolDivider $before={23} $after={15} />
      <ToolGroup $gap={27}>
        <ShareIcon />
        <LinkIcon />
        <MailIcon />
      </ToolGroup>
    </ToolBar>

    <Main>
      <DocColumn>
        <Doc>
          <Glossary>Glossary</Glossary>
          <GlossaryList>
            <GlossaryItem $gap={0}><strong>Mainstream OS</strong>: Windows, Linux, Unix, MacOS</GlossaryItem>
            <GlossaryItem $gap={6}><strong>Persons</strong>: Any person in the contact list. Includes all employees, clients and partners.</GlossaryItem>
            <GlossaryItem $gap={2}><strong>State</strong>: The page that displays the results from the last command given.</GlossaryItem>
            <GlossaryItem $gap={7}><strong>UID</strong>: A unique numerical identifier for any person added in NetConnect.</GlossaryItem>
            <GlossaryItem $gap={5}><strong>CSV file</strong>: A plain text file format that uses commas to separate values, and newlines to separate records.</GlossaryItem>
            <GlossaryItem $gap={3}><strong>Alias</strong>: A shortcut name/format for commands.</GlossaryItem>
          </GlossaryList>
          <Rule />
          <AppendixHeading>Appendix: Instructions for manual testing</AppendixHeading>
          <Lead>Given below are instructions to test the app manually.</Lead>
          <NoteBox>
            <NoteIcon>
              <InfoIcon />
            </NoteIcon>
            <NoteBody>
              <strong>Note:</strong> These instructions only provide a starting point for testers to work on; testers are expected to do more
              <br />
              testing.
            </NoteBody>
          </NoteBox>
        </Doc>
        <StatusRow>
          <PageSize>8.26 x 11.69 in</PageSize>
          <HThumbRow>
            <HThumb />
          </HThumbRow>
        </StatusRow>
        <Palette>
          <Grip />
          <PaletteButton $active><ArrowIcon /></PaletteButton>
          <PaletteButton><AddCommentIcon /></PaletteButton>
          <PaletteButton><HighlightIcon /></PaletteButton>
          <PaletteButton><LassoIcon /></PaletteButton>
          <PaletteButton><TextBoxIcon /></PaletteButton>
          <PaletteButton><SignIcon /></PaletteButton>
        </Palette>
        <ZoomPopup>
          <ZoomValue>200%</ZoomValue>
          <SliderTrack>
            <SliderKnob />
            <SliderTick />
          </SliderTrack>
        </ZoomPopup>
      </DocColumn>
      <VTrack />
      <Rail>
        <RailIcon $top={0}><CommentsIcon /></RailIcon>
        <RailIcon $top={24}><BookmarkIcon /></RailIcon>
        <RailIcon $top={22}><PagesIcon /></RailIcon>
        <RailSpacer />
        <PageBox>29</PageBox>
        <PageNum>30</PageNum>
        <RailIcon $top={14}><ChevronUp /></RailIcon>
        <RailIcon $top={17}><ChevronDown /></RailIcon>
        <RailLine />
        <RailIcon $top={13}><RotateIcon /></RailIcon>
        <RailIcon $top={18}><ActualSizeIcon /></RailIcon>
        <RailIcon $top={21}><ZoomInIcon /></RailIcon>
        <RailIcon $top={20}><ZoomOutIcon /></RailIcon>
      </Rail>
    </Main>

    <Taskbar>
      <Weather>
        <WeatherTemp>30°</WeatherTemp>
        <WeatherCloud><CloudSun /></WeatherCloud>
      </Weather>
      <AppSlot><WindowsLogo /></AppSlot>
      <AppSlot><TaskSearch /></AppSlot>
      <AppSlot><TaskView /></AppSlot>
      <AppSlot><TeamsIcon /></AppSlot>
      <AppSlot><FolderIcon /><RunDot /></AppSlot>
      <AppSlot><GearIcon /></AppSlot>
      <AppSlot $active $tint="#45292a"><ChromeIcon /><AvatarBadge>K</AvatarBadge><RunDot $color="#f29bb0" /></AppSlot>
      <AppSlot><PowerPointIcon /></AppSlot>
      <AppSlot><WordIcon /><RunDot /></AppSlot>
      <AppSlot><OutlookIcon /></AppSlot>
      <AppSlot><TeamsNewIcon /></AppSlot>
      <AppSlot><NotepadIcon /><RunDot /></AppSlot>
      <AppSlot><PythonFileIcon /></AppSlot>
      <AppSlot><EclipseIcon /></AppSlot>
      <AppSlot><UbuntuIcon /></AppSlot>
      <AppSlot><IntelliJIcon /></AppSlot>
      <AppSlot><SourcetreeIcon /></AppSlot>
      <AppSlot><WhatsAppIcon /><Badge>56</Badge></AppSlot>
      <AppSlot><TerminalIcon /></AppSlot>
      <AppSlot $active $divider $width={57}><AcrobatIcon /><RunDot $color="#4db8f0" $wide $shift={-1} /></AppSlot>
      <AppSlot $width={60}><ZoomAppIcon /><RunDot /></AppSlot>
      <AppSlot $divider $width={57}><DotsIcon /></AppSlot>
      <Tray>
        <TrayCell $width={40}><TrayChevron /></TrayCell>
        <TrayCell $width={40}><OneDriveIcon /></TrayCell>
        <TrayCell $width={40}><MicIcon /></TrayCell>
        <LangBlock>ENG<br />US</LangBlock>
        <TrayCell $width={38}><WifiIcon /></TrayCell>
        <TrayCell $width={20}><VolumeIcon /></TrayCell>
        <TrayCell $width={43}><BatteryIcon /></TrayCell>
        <Clock>5:32 pm<br />19/4/2024</Clock>
        <TrayCell $width={38}><TrayBell /></TrayCell>
        <TrayCell $width={53}><CopilotIcon /></TrayCell>
      </Tray>
    </Taskbar>
  </Page>
);

export default App;
